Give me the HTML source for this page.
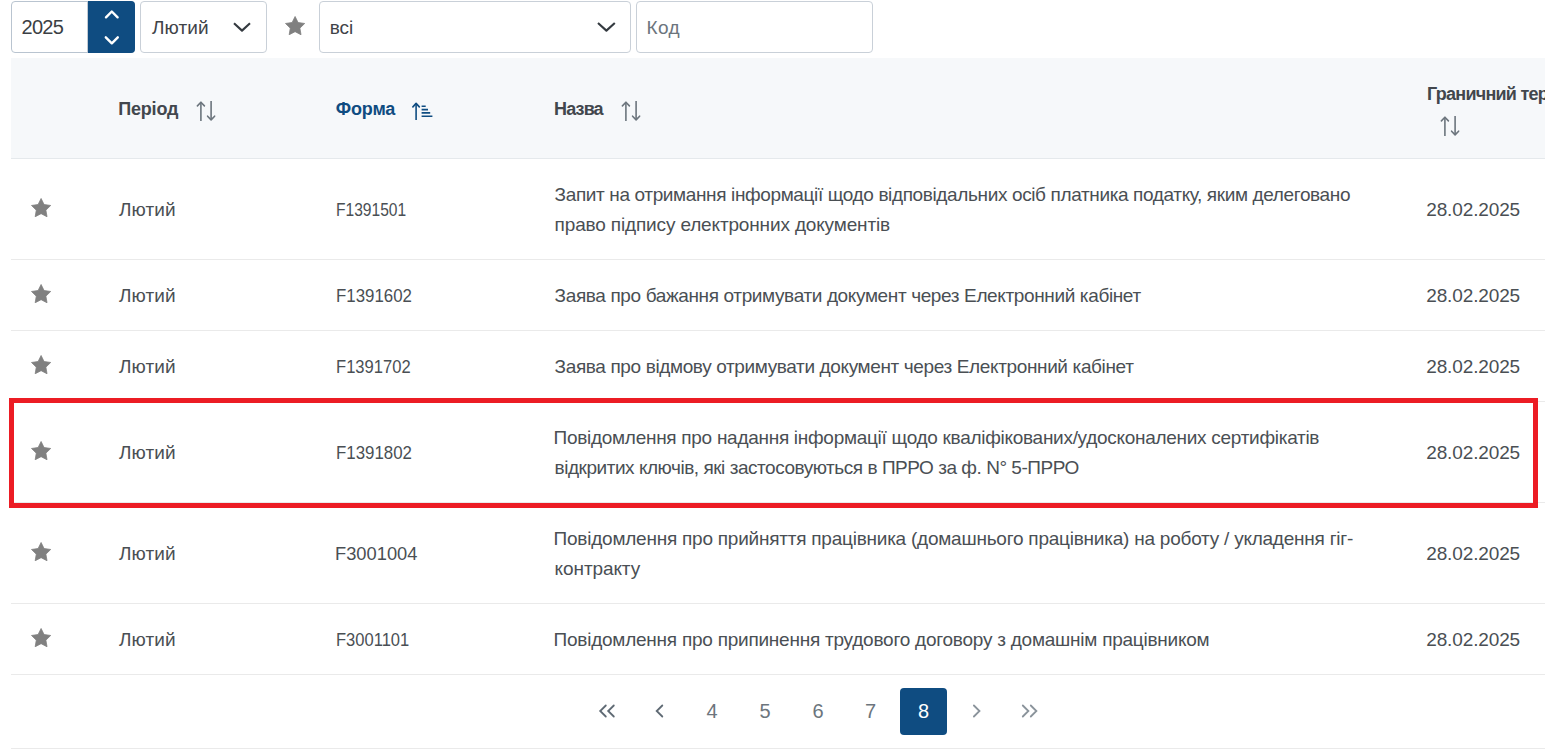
<!DOCTYPE html>
<html><head><meta charset="utf-8">
<style>
*{box-sizing:border-box;}
html,body{margin:0;padding:0;background:#fff;width:1545px;height:756px;overflow:hidden;position:relative;font-family:"Liberation Sans",sans-serif;color:#4a4f54;}
.abs{position:absolute;}
.box{position:absolute;border:1px solid #c9d0d8;border-radius:4px;background:#fff;}
.txt{position:absolute;white-space:nowrap;font-size:19.0px;line-height:30px;}
.row{position:absolute;left:11px;width:1534px;border-bottom:1px solid #eaeaea;}
.hdr{font-weight:bold;color:#42474d;font-size:18.0px;}
.pg{position:absolute;top:688px;width:47px;height:47px;text-align:center;line-height:47px;font-size:20px;color:#6c757d;}
</style></head><body>
<div class="box" style="left:11px;top:1px;width:124px;height:52px;border-color:#b9c4d0;"></div>
<div class="abs" style="left:88px;top:1px;width:47px;height:52px;background:#0f4c81;border-radius:0 4px 4px 0;"></div>
<div class="abs" style="left:87px;top:2px;width:1px;height:50px;background:#c2cad3;"></div>
<div class="txt" style="left:21.60px;top:12.00px;letter-spacing:-0.733px;font-size:20px;color:#3b3f44;">2025</div>
<svg class="abs" style="left:103px;top:9px" width="18" height="37" viewBox="0 0 18 37">
  <path d="M3 8.3 L8.8 2.5 L14.6 8.3" fill="none" stroke="#fff" stroke-width="2.4" stroke-linecap="round" stroke-linejoin="round"/>
  <path d="M2.8 28.3 L8.8 34.3 L14.8 28.3" fill="none" stroke="#fff" stroke-width="2.4" stroke-linecap="round" stroke-linejoin="round"/>
</svg>
<div class="box" style="left:140px;top:1px;width:127px;height:52px;"></div>
<div class="txt" style="left:152.00px;top:13.00px;letter-spacing:0.075px;color:#3f4348;">Лютий</div>
<svg class="abs" style="left:232px;top:21px" width="20" height="12" viewBox="0 0 20 12"><path d="M2 2.3 L10 9.6 L18 2.3" fill="none" stroke="#343a40" stroke-width="2.1" stroke-linecap="butt" stroke-linejoin="round"/></svg>
<svg class="abs" style="left:285px;top:16px" width="20.2" height="19.4" viewBox="0 0 20.2 19.4"><polygon points="10.10,0.50 13.07,6.51 19.71,7.48 14.90,12.16 16.04,18.77 10.10,15.65 4.16,18.77 5.30,12.16 0.49,7.48 7.13,6.51" fill="#808080" stroke="#808080" stroke-width="0.8" stroke-linejoin="round"/></svg>
<div class="box" style="left:319px;top:1px;width:312px;height:52px;"></div>
<div class="txt" style="left:329.70px;top:13.00px;letter-spacing:0.000px;color:#3f4348;">всі</div>
<svg class="abs" style="left:596px;top:18px" width="20" height="16" viewBox="0 0 20 16"><path d="M2 5 L10.4 12.6 L18.8 5" fill="none" stroke="#343a40" stroke-width="2.1" stroke-linecap="butt" stroke-linejoin="round"/></svg>
<div class="box" style="left:636px;top:1px;width:237px;height:52px;"></div>
<div class="txt" style="left:646.60px;top:13.00px;letter-spacing:0.400px;color:#6c757d;">Код</div>
<div class="row" style="top:58px;height:101px;background:#f6f8fa;border-bottom-color:#e5e9ec;"></div>
<div class="txt hdr" style="left:118.20px;top:94.00px;letter-spacing:-0.180px;">Період</div>
<svg class="abs" style="left:196px;top:100px" width="21" height="22" viewBox="0 0 21 22"><g fill="none" stroke="#6c757d" stroke-width="1.6" stroke-linejoin="round"><path d="M4.9 2.2 V20.9 M15.1 0.9 V19.6"/><path stroke-linecap="round" d="M1.4 5.9 L4.9 2.2 L8.4 5.9 M11.6 16.2 L15.1 19.9 L18.6 16.2"/></g></svg>
<div class="txt hdr" style="left:335.80px;top:94.00px;letter-spacing:-0.175px;color:#0f4c81;">Форма</div>
<svg class="abs" style="left:412px;top:101px" width="23" height="20" viewBox="0 0 23 20"><g fill="none" stroke="#0f4c81" stroke-width="1.6" stroke-linejoin="round"><path d="M4.1 2.4 V18.9"/><path stroke-linecap="round" d="M0.9 5.9 L4.1 2.4 L7.3 5.9"/><path d="M9.6 5.2 H13.7 M9.6 8.6 H16 M9.6 11.9 H18.2 M9.6 15.3 H20.4"/></g></svg>
<div class="txt hdr" style="left:554.10px;top:94.00px;letter-spacing:-0.875px;">Назва</div>
<svg class="abs" style="left:621px;top:100px" width="21" height="22" viewBox="0 0 21 22"><g fill="none" stroke="#6c757d" stroke-width="1.6" stroke-linejoin="round"><path d="M4.9 2.2 V20.9 M15.1 0.9 V19.6"/><path stroke-linecap="round" d="M1.4 5.9 L4.9 2.2 L8.4 5.9 M11.6 16.2 L15.1 19.9 L18.6 16.2"/></g></svg>
<div class="txt hdr" style="left:1427.00px;top:79.00px;letter-spacing:0.000px;letter-spacing:-0.75px;">Граничний термін</div>
<svg class="abs" style="left:1440px;top:115px" width="21" height="22" viewBox="0 0 21 22"><g fill="none" stroke="#6c757d" stroke-width="1.6" stroke-linejoin="round"><path d="M4.9 2.2 V20.9 M15.1 0.9 V19.6"/><path stroke-linecap="round" d="M1.4 5.9 L4.9 2.2 L8.4 5.9 M11.6 16.2 L15.1 19.9 L18.6 16.2"/></g></svg>
<div class="row" style="top:159px;height:101px;"></div>
<svg class="abs" style="left:31px;top:197.8px" width="20.2" height="19.4" viewBox="0 0 20.2 19.4"><polygon points="10.10,0.50 13.07,6.51 19.71,7.48 14.90,12.16 16.04,18.77 10.10,15.65 4.16,18.77 5.30,12.16 0.49,7.48 7.13,6.51" fill="#808080" stroke="#808080" stroke-width="0.8" stroke-linejoin="round"/></svg>
<div class="txt" style="left:118.90px;top:195.00px;letter-spacing:0.100px;">Лютий</div>
<div class="txt" style="left:336.40px;top:195.00px;transform:scaleX(0.8200);transform-origin:0 0;">F1391501</div>
<div class="txt" style="left:1426.20px;top:195.00px;letter-spacing:-0.121px;">28.02.2025</div>
<div class="txt" style="left:554.60px;top:180.00px;letter-spacing:-0.370px;">Запит на отримання інформації щодо відповідальних осіб платника податку, яким делеговано</div>
<div class="txt" style="left:554.60px;top:210.00px;letter-spacing:-0.152px;">право підпису електронних документів</div>
<div class="row" style="top:260px;height:71px;"></div>
<svg class="abs" style="left:31px;top:283.8px" width="20.2" height="19.4" viewBox="0 0 20.2 19.4"><polygon points="10.10,0.50 13.07,6.51 19.71,7.48 14.90,12.16 16.04,18.77 10.10,15.65 4.16,18.77 5.30,12.16 0.49,7.48 7.13,6.51" fill="#808080" stroke="#808080" stroke-width="0.8" stroke-linejoin="round"/></svg>
<div class="txt" style="left:118.90px;top:281.00px;letter-spacing:0.100px;">Лютий</div>
<div class="txt" style="left:336.40px;top:281.00px;transform:scaleX(0.8867);transform-origin:0 0;">F1391602</div>
<div class="txt" style="left:1426.20px;top:281.00px;letter-spacing:-0.121px;">28.02.2025</div>
<div class="txt" style="left:554.60px;top:281.00px;letter-spacing:-0.370px;">Заява про бажання отримувати документ через Електронний кабінет</div>
<div class="row" style="top:331px;height:71px;"></div>
<svg class="abs" style="left:31px;top:354.8px" width="20.2" height="19.4" viewBox="0 0 20.2 19.4"><polygon points="10.10,0.50 13.07,6.51 19.71,7.48 14.90,12.16 16.04,18.77 10.10,15.65 4.16,18.77 5.30,12.16 0.49,7.48 7.13,6.51" fill="#808080" stroke="#808080" stroke-width="0.8" stroke-linejoin="round"/></svg>
<div class="txt" style="left:118.90px;top:352.00px;letter-spacing:0.100px;">Лютий</div>
<div class="txt" style="left:336.40px;top:352.00px;transform:scaleX(0.8724);transform-origin:0 0;">F1391702</div>
<div class="txt" style="left:1426.20px;top:352.00px;letter-spacing:-0.121px;">28.02.2025</div>
<div class="txt" style="left:554.60px;top:352.00px;letter-spacing:-0.369px;">Заява про відмову отримувати документ через Електронний кабінет</div>
<div class="row" style="top:402px;height:101px;"></div>
<svg class="abs" style="left:31px;top:440.8px" width="20.2" height="19.4" viewBox="0 0 20.2 19.4"><polygon points="10.10,0.50 13.07,6.51 19.71,7.48 14.90,12.16 16.04,18.77 10.10,15.65 4.16,18.77 5.30,12.16 0.49,7.48 7.13,6.51" fill="#808080" stroke="#808080" stroke-width="0.8" stroke-linejoin="round"/></svg>
<div class="txt" style="left:118.90px;top:438.00px;letter-spacing:0.100px;">Лютий</div>
<div class="txt" style="left:336.40px;top:438.00px;transform:scaleX(0.8867);transform-origin:0 0;">F1391802</div>
<div class="txt" style="left:1426.20px;top:438.00px;letter-spacing:-0.121px;">28.02.2025</div>
<div class="txt" style="left:553.60px;top:423.00px;letter-spacing:-0.286px;">Повідомлення про надання інформації щодо кваліфікованих/удосконалених сертифікатів</div>
<div class="txt" style="left:554.60px;top:453.00px;letter-spacing:-0.466px;">відкритих ключів, які застосовуються в ПРРО за ф. N° 5-ПРРО</div>
<div class="row" style="top:503px;height:101px;"></div>
<svg class="abs" style="left:31px;top:541.8px" width="20.2" height="19.4" viewBox="0 0 20.2 19.4"><polygon points="10.10,0.50 13.07,6.51 19.71,7.48 14.90,12.16 16.04,18.77 10.10,15.65 4.16,18.77 5.30,12.16 0.49,7.48 7.13,6.51" fill="#808080" stroke="#808080" stroke-width="0.8" stroke-linejoin="round"/></svg>
<div class="txt" style="left:118.90px;top:539.00px;letter-spacing:0.100px;">Лютий</div>
<div class="txt" style="left:335.40px;top:539.00px;transform:scaleX(0.9631);transform-origin:0 0;">F3001004</div>
<div class="txt" style="left:1426.20px;top:539.00px;letter-spacing:-0.121px;">28.02.2025</div>
<div class="txt" style="left:553.60px;top:524.00px;letter-spacing:-0.234px;">Повідомлення про прийняття працівника (домашнього працівника) на роботу / укладення гіг-</div>
<div class="txt" style="left:554.60px;top:554.00px;letter-spacing:-0.100px;">контракту</div>
<div class="row" style="top:604px;height:71px;"></div>
<svg class="abs" style="left:31px;top:627.8px" width="20.2" height="19.4" viewBox="0 0 20.2 19.4"><polygon points="10.10,0.50 13.07,6.51 19.71,7.48 14.90,12.16 16.04,18.77 10.10,15.65 4.16,18.77 5.30,12.16 0.49,7.48 7.13,6.51" fill="#808080" stroke="#808080" stroke-width="0.8" stroke-linejoin="round"/></svg>
<div class="txt" style="left:118.90px;top:625.00px;letter-spacing:0.100px;">Лютий</div>
<div class="txt" style="left:336.40px;top:625.00px;transform:scaleX(0.8700);transform-origin:0 0;">F3001101</div>
<div class="txt" style="left:1426.20px;top:625.00px;letter-spacing:-0.121px;">28.02.2025</div>
<div class="txt" style="left:553.60px;top:625.00px;letter-spacing:-0.239px;">Повідомлення про припинення трудового договору з домашнім працівником</div>
<div class="abs" style="left:9px;top:398px;width:1529px;height:110px;border:5px solid #ec1c24;"></div>
<div class="row" style="top:675px;height:74px;"></div>
<div class="pg" style="left:688.5px;">4</div>
<div class="pg" style="left:741.5px;">5</div>
<div class="pg" style="left:794.5px;">6</div>
<div class="pg" style="left:847.0px;">7</div>
<div class="pg" style="left:900.0px;background:#0f4c81;color:#fff;border-radius:4px;">8</div>
<svg class="abs" style="left:0;top:0" width="1545" height="756"><path d="M605.8 705.5 L600.2 711 L605.8 716.5 M613.8 705.5 L608.2 711 L613.8 716.5" fill="none" stroke="#5f6a74" stroke-width="1.8" stroke-linecap="round" stroke-linejoin="miter"/><path d="M662.3 705.5 L656.7 711 L662.3 716.5" fill="none" stroke="#5f6a74" stroke-width="1.8" stroke-linecap="round" stroke-linejoin="miter"/><path d="M973.9 705.5 L979.5 711 L973.9 716.5" fill="none" stroke="#8a939b" stroke-width="1.8" stroke-linecap="round" stroke-linejoin="miter"/><path d="M1022.8 705.5 L1028.4 711 L1022.8 716.5 M1030.8 705.5 L1036.4 711 L1030.8 716.5" fill="none" stroke="#8a939b" stroke-width="1.8" stroke-linecap="round" stroke-linejoin="miter"/></svg>
</body></html>
